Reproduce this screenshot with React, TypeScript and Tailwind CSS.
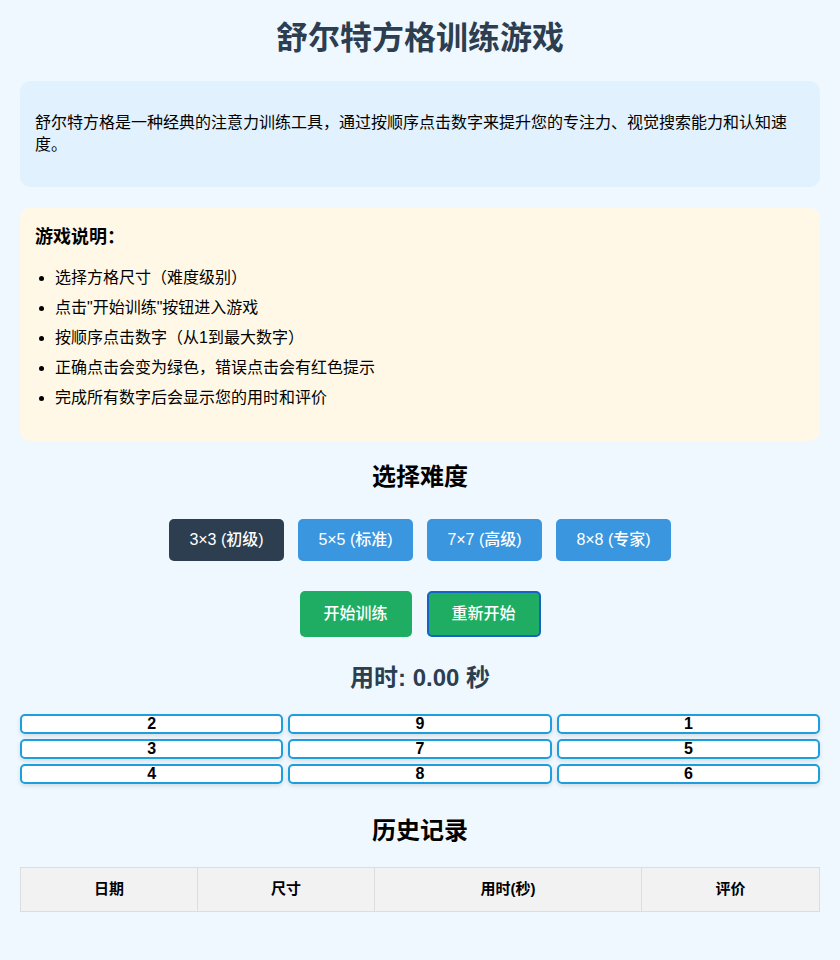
import React from "react";

const font = { fontFamily: '"Liberation Sans", "Noto Sans CJK SC", sans-serif' };

export default function App() {
  const cells = [2, 9, 1, 3, 7, 5, 4, 8, 6];
  const levels = ["3×3 (初级)", "5×5 (标准)", "7×7 (高级)", "8×8 (专家)"];
  const items = [
    "选择方格尺寸（难度级别）",
    '点击"开始训练"按钮进入游戏',
    "按顺序点击数字（从1到最大数字）",
    "正确点击会变为绿色，错误点击会有红色提示",
    "完成所有数字后会显示您的用时和评价",
  ];
  return (
    <div className="min-h-[960px] bg-[#f0f8ff] px-5 text-black" style={font}>
      <h1 className="pt-[18px] text-center text-[32px] font-bold leading-[40px] text-[#2c3e50]">
        舒尔特方格训练游戏
      </h1>
      <div className="mt-[23px] rounded-[10px] bg-[#e1f1fd] px-[15px] py-[31px] text-[16px] leading-[22px]">
        舒尔特方格是一种经典的注意力训练工具，通过按顺序点击数字来提升您的专注力、视觉搜索能力和认知速度。
      </div>
      <div className="mt-[21px] rounded-[10px] bg-[#fff8e6] px-[15px] pt-[18px] pb-[28px]">
        <div className="h-[22px] text-[18px] font-bold leading-[22px]">游戏说明：</div>
        <ul className="mt-[15px] list-disc pl-5 text-[16px]">
          {items.map((t) => (
            <li key={t} className="h-[30px] leading-[30px]">
              {t}
            </li>
          ))}
        </ul>
      </div>
      <h2 className="mt-[21px] text-center text-[24px] font-bold leading-[30px]">选择难度</h2>
      <div className="mt-[27px] flex justify-center gap-[14px]">
        {levels.map((l, i) => (
          <button
            key={l}
            className={`h-[42px] w-[115px] rounded-[5px] text-[16px] font-medium text-white ${
              i === 0 ? "bg-[#2c3e50]" : "bg-[#3b96e0]"
            }`}
          >
            {l}
          </button>
        ))}
      </div>
      <div className="mt-[30px] flex justify-center gap-[15px]">
        <button className="h-[46px] w-[112px] rounded-[5px] bg-[#1fad63] text-[16px] font-medium text-white">
          开始训练
        </button>
        <button className="h-[46px] w-[114px] rounded-[5px] border-2 border-[#1563c4] bg-[#1fad63] text-[16px] font-medium text-white">
          重新开始
        </button>
      </div>
      <div className="mt-[26px] text-center text-[24px] font-bold leading-[30px] text-[#2c3e50]">
        用时: 0.00 秒
      </div>
      <div className="mt-[21px] grid grid-cols-3 gap-x-[5px] gap-y-[5px]">
        {cells.map((n) => (
          <div
            key={n}
            className="flex h-[20px] items-center justify-center rounded-[5px] border-2 border-[#1f9ede] bg-white text-[16px] font-bold leading-none shadow-[0_2px_4px_rgba(0,0,0,0.12)]"
          >
            {n}
          </div>
        ))}
      </div>
      <h2 className="mt-[32px] text-center text-[24px] font-bold leading-[30px]">历史记录</h2>
      <table className="mt-[21px] w-full border-collapse text-[15px]">
        <thead>
          <tr className="bg-[#f2f2f2]">
            <th className="h-[44px] w-[177px] border border-[#dddddd] font-bold">日期</th>
            <th className="h-[44px] w-[177px] border border-[#dddddd] font-bold">尺寸</th>
            <th className="h-[44px] w-[267px] border border-[#dddddd] font-bold">用时(秒)</th>
            <th className="h-[44px] border border-[#dddddd] font-bold">评价</th>
          </tr>
        </thead>
      </table>
    </div>
  );
}
